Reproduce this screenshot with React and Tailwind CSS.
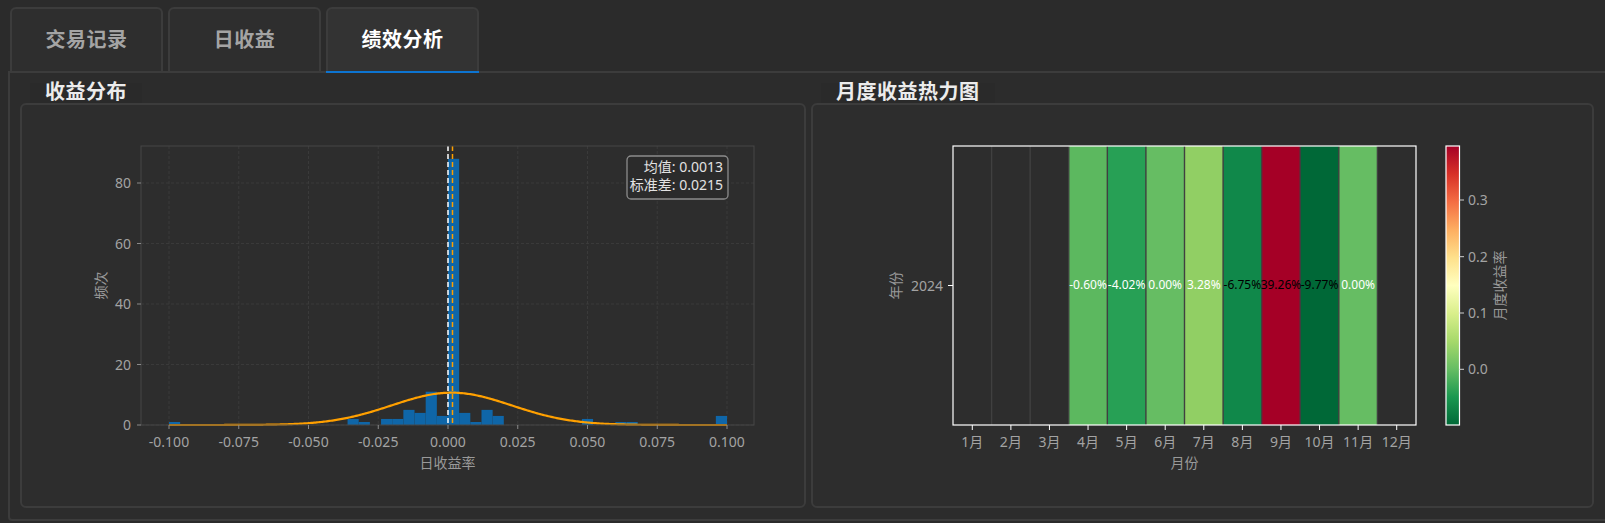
import React from 'react';

// Histogram counts per bin (50 bins of width 0.004 spanning -0.1..0.1)
const BINS = { 0: 1, 16: 2, 17: 1, 19: 2, 20: 2, 21: 5, 22: 4, 23: 11, 24: 3, 25: 88, 26: 4, 27: 1, 28: 5, 29: 3, 37: 2, 40: 1, 41: 1, 49: 3 };

const xv = (v) => 448 + v * 2790;
const yc = (c) => 425 - c * 3.025;

function normalPath() {
  const mu = 0.0013;
  const sd = 0.0215;
  const k = (144 * 0.004) / (sd * Math.sqrt(2 * Math.PI));
  const pts = [];
  for (let i = 0; i <= 400; i++) {
    const v = -0.1 + i * 0.0005;
    const c = k * Math.exp(-0.5 * ((v - mu) / sd) ** 2);
    pts.push(`${i ? 'L' : 'M'}${xv(v).toFixed(2)},${yc(c).toFixed(2)}`);
  }
  return pts.join('');
}

const XTICKS = [-0.1, -0.075, -0.05, -0.025, 0, 0.025, 0.05, 0.075, 0.1];
const YTICKS = [0, 20, 40, 60, 80];

function Histogram() {
  return (
    <svg width="782" height="400" viewBox="22 105 782 400" className="block">
      {/* grid */}
      {XTICKS.map((t) => (
        <line key={'gx' + t} x1={xv(t)} x2={xv(t)} y1="146" y2="425" stroke="#3e3e3e" strokeWidth="0.8" strokeDasharray="3 2" />
      ))}
      {YTICKS.map((t) => (
        <line key={'gy' + t} x1="141" x2="754" y1={yc(t)} y2={yc(t)} stroke="#3e3e3e" strokeWidth="0.8" strokeDasharray="3 2" />
      ))}
      {/* bars */}
      {Object.entries(BINS).map(([i, c]) => (
        <rect key={'b' + i} x={169 + Number(i) * 11.16} y={yc(c)} width="11.16" height={c * 3.025} fill="#0f66a8" />
      ))}
      {/* fitted normal curve */}
      <path d={normalPath()} fill="none" stroke="#ffa000" strokeWidth="2.2" strokeLinejoin="round" />
      {/* median and mean markers */}
      <line x1="448" x2="448" y1="146" y2="425" stroke="#ffffff" strokeWidth="1.5" strokeDasharray="5 3" />
      <line x1="452.5" x2="452.5" y1="146" y2="425" stroke="#ffa000" strokeWidth="1.5" strokeDasharray="5 3" />
      {/* spines */}
      <rect x="141" y="146" width="613" height="279" fill="none" stroke="#474747" strokeWidth="1" />
      {/* ticks */}
      {XTICKS.map((t) => (
        <g key={'tx' + t}>
          <line x1={xv(t)} x2={xv(t)} y1="425" y2="429" stroke="#8a8a8a" strokeWidth="1" />
          <text x={xv(t)} y="446.5" textAnchor="middle" fontSize="14" fill="#a3a3a3">
            {t.toFixed(3)}
          </text>
        </g>
      ))}
      {YTICKS.map((t) => (
        <g key={'ty' + t}>
          <line x1="137" x2="141" y1={yc(t)} y2={yc(t)} stroke="#8a8a8a" strokeWidth="1" />
          <text x="131" y={yc(t) + 5} textAnchor="end" fontSize="14" fill="#a3a3a3">
            {t}
          </text>
        </g>
      ))}
      <text x="447.5" y="468" textAnchor="middle" fontSize="14" fill="#999999">日收益率</text>
      <text x="0" y="0" transform="translate(106,285.5) rotate(-90)" textAnchor="middle" fontSize="14" fill="#999999">频次</text>
      {/* stats box */}
      <rect x="627" y="156" width="101" height="43" rx="4" fill="#2b2b2b" fillOpacity="0.85" stroke="#8c8c8c" strokeWidth="1.3" />
      <text x="723" y="171.5" textAnchor="end" fontSize="14" fill="#e2e2e2">均值: 0.0013</text>
      <text x="723" y="189.5" textAnchor="end" fontSize="14" fill="#e2e2e2">标准差: 0.0215</text>
    </svg>
  );
}

const MONTHS = [
  null,
  null,
  null,
  { v: '-0.60%', c: '#5cb85f', t: '#ffffff' },
  { v: '-4.02%', c: '#27a055', t: '#ffffff' },
  { v: '0.00%', c: '#66bd63', t: '#ffffff' },
  { v: '3.28%', c: '#91cf64', t: '#ffffff' },
  { v: '-6.75%', c: '#10884a', t: '#000000' },
  { v: '39.26%', c: '#a50026', t: '#000000' },
  { v: '-9.77%', c: '#006837', t: '#000000' },
  { v: '0.00%', c: '#66bd63', t: '#ffffff' },
  null,
];

const RDYLGN = ['#006837', '#1a9850', '#66bd63', '#a6d96a', '#d9ef8b', '#ffffbf', '#fee08b', '#fdae61', '#f46d43', '#d73027', '#a50026'];
const CB_TICKS = [
  { l: '0.0', y: 369.3 },
  { l: '0.1', y: 313 },
  { l: '0.2', y: 256.7 },
  { l: '0.3', y: 200 },
];

function Heatmap() {
  const x0 = 953;
  const w = 463 / 12;
  return (
    <svg width="779" height="400" viewBox="813 105 779 400" className="block">
      <defs>
        <linearGradient id="cbar" x1="0" y1="1" x2="0" y2="0">
          {RDYLGN.map((c, i) => (
            <stop key={c} offset={i / 10} stopColor={c} />
          ))}
        </linearGradient>
      </defs>
      {MONTHS.map((m, i) =>
        m ? <rect key={'c' + i} x={x0 + i * w} y="146" width={w} height="279" fill={m.c} /> : null
      )}
      {Array.from({ length: 11 }, (_, i) => (
        <line key={'s' + i} x1={x0 + (i + 1) * w} x2={x0 + (i + 1) * w} y1="146" y2="425" stroke="#404040" strokeWidth="1.4" />
      ))}
      {MONTHS.map((m, i) =>
        m ? (
          <text key={'t' + i} x={x0 + i * w + w / 2} y="289" textAnchor="middle" fontSize="12" fill={m.t}>
            {m.v}
          </text>
        ) : null
      )}
      <rect x="953" y="146" width="463" height="279" fill="none" stroke="#ffffff" strokeWidth="1.2" />
      {MONTHS.map((_, i) => (
        <g key={'x' + i}>
          <line x1={x0 + i * w + w / 2} x2={x0 + i * w + w / 2} y1="425" y2="430" stroke="#ffffff" strokeWidth="1" />
          <text x={x0 + i * w + w / 2} y="447" textAnchor="middle" fontSize="14" fill="#a3a3a3">
            {i + 1}月
          </text>
        </g>
      ))}
      <line x1="948" x2="953" y1="285.5" y2="285.5" stroke="#ffffff" strokeWidth="1" />
      <text x="943" y="290.5" textAnchor="end" fontSize="14" fill="#a3a3a3">2024</text>
      <text x="1184.5" y="468" textAnchor="middle" fontSize="14" fill="#999999">月份</text>
      <text x="0" y="0" transform="translate(901,285.5) rotate(-90)" textAnchor="middle" fontSize="14" fill="#999999">年份</text>
      {/* colour bar */}
      <rect x="1446" y="146" width="13.5" height="279" fill="url(#cbar)" stroke="#ffffff" strokeWidth="1.2" />
      {CB_TICKS.map((t) => (
        <g key={t.l}>
          <line x1="1459.5" x2="1464" y1={t.y} y2={t.y} stroke="#d0d0d0" strokeWidth="1" />
          <text x="1468" y={t.y + 5} fontSize="14" fill="#a3a3a3">{t.l}</text>
        </g>
      ))}
      <text x="0" y="0" transform="translate(1505,285.5) rotate(-90)" textAnchor="middle" fontSize="14" fill="#999999">月度收益率</text>
    </svg>
  );
}

function Tab({ label, active }) {
  return (
    <div
      className={
        'relative w-[153px] h-[64px] flex items-center justify-center rounded-t-[6px] border-2 border-b-0 border-[#3c3c3c] text-[20px] font-bold tracking-[0.5px] ' +
        (active ? 'bg-[#333333] text-white' : 'bg-[#2e2e2e] text-[#a4a4a4]')
      }
    >
      {label}
      {active && <span className="absolute left-[-2px] right-[-2px] bottom-[-2px] h-[2px] bg-[#0d74d1]" />}
    </div>
  );
}

function Group({ title, width, children }) {
  return (
    <div className="flex flex-col shrink-0" style={{ width }}>
      <div className="h-[30px] flex items-end pl-[10px]">
        <span className="h-[20px] flex items-center px-[15px] pb-[2px] bg-[#2a2a2a] text-[20px] leading-none font-bold tracking-[0.5px] text-[#ececec]">
          {title}
        </span>
      </div>
      <div className="h-[405px] border-2 border-[#3c3c3c] rounded-[6px] bg-[#2d2d2d] overflow-hidden">{children}</div>
    </div>
  );
}

export default function App() {
  return (
    <div className="w-[1605px] h-[523px] bg-[#2b2b2b] overflow-hidden font-['Noto_Sans','Noto_Sans_CJK_SC',sans-serif]">
      <div className="flex gap-[5px] pl-[10px] pt-[7px] relative z-10">
        <Tab label="交易记录" />
        <Tab label="日收益" />
        <Tab label="绩效分析" active />
      </div>
      <div className="ml-[8px] w-[1600px] h-[450px] border-2 border-[#3c3c3c] rounded-bl-[4px] bg-[#2c2c2c] flex gap-[5px] pl-[10px]">
        <Group title="收益分布" width={786}>
          <Histogram />
        </Group>
        <Group title="月度收益热力图" width={783}>
          <Heatmap />
        </Group>
      </div>
    </div>
  );
}
